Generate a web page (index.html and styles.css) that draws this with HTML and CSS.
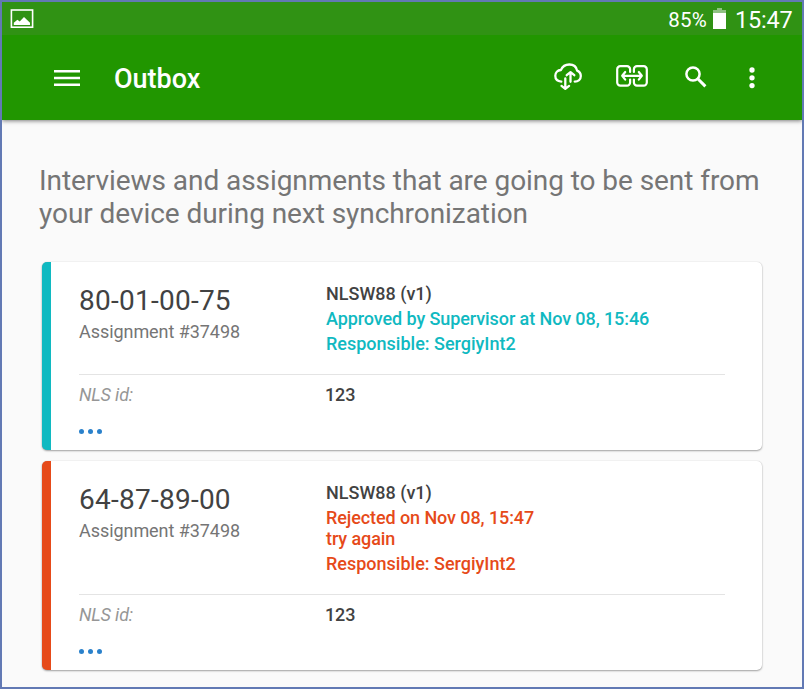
FILE: index.html
```html
<!DOCTYPE html>
<html lang="en">
<head>
<meta charset="utf-8">
<title>Outbox</title>
<link rel="stylesheet" href="styles.css">
</head>
<body>
<div class="screen">
  <div class="status">
    <svg class="picture" width="24" height="20" viewBox="0 0 24 20"><rect x="1.4" y="1" width="21.2" height="17.2" fill="none" stroke="#fff" stroke-width="1.6"/><path d="M3.8 16V13.8L7.4 10.8l2.3 1.8L14 8l6 5.8V16z" fill="#fff"/></svg>
    <span class="percent">85%</span>
    <svg class="battery" width="13" height="21" viewBox="0 0 13 21"><path d="M4 0h5v2h4v3H0V2h4z" fill="#8fc282"/><path d="M0 5h13v16H0z" fill="#fff"/></svg>
    <span class="clock">15:47</span>
  </div>
  <header class="toolbar">
    <svg class="menu" width="26" height="18" viewBox="0 0 26 18"><path d="M0 2.3h26M0 9h26M0 15.7h26" stroke="#fff" stroke-width="2.5"/></svg>
    <h1>Outbox</h1>
    <svg class="sync" width="28" height="28" viewBox="0 0 28 28" fill="none" stroke="#fff" stroke-width="2.3" stroke-linecap="round" stroke-linejoin="round"><path d="M7.3 18.6C3.7 18.3 1.3 16 1.3 12.8c0-3.2 2.3-5.6 5.6-5.8C8.4 3.5 11.7 1.5 15.3 1.5c4.1 0 7.1 2.3 7.8 6.1 2.3 1 3.7 3 3.7 5.4 0 3.4-2.6 5.6-6.1 5.6"/><path d="M11.3 15.5v10.2M7.5 22.9l3.8 3 3.8-3M16.5 18.8v-9.4M12.7 12.2l3.8-3 3.8 3"/></svg>
    <svg class="link" width="32" height="22" viewBox="0 0 32 22" fill="none" stroke="#fff" stroke-width="2.2" stroke-linecap="round" stroke-linejoin="round"><path d="M14.1 7V4.3a3.1 3.1 0 0 0-3.1-3.1H4.3a3.1 3.1 0 0 0-3.1 3.1v13.2a3.1 3.1 0 0 0 3.1 3.1H11a3.1 3.1 0 0 0 3.1-3.1v-2.9M17.9 7V4.3A3.1 3.1 0 0 1 21 1.2h6.7a3.1 3.1 0 0 1 3.1 3.1v13.2a3.1 3.1 0 0 1-3.1 3.1H21a3.1 3.1 0 0 1-3.1-3.1v-2.9"/><path d="M6.5 10.8h19M9.2 7 6.2 10.8l3 3.8M22.8 7l3 3.8-3 3.8"/></svg>
    <svg class="search" width="22" height="22" viewBox="0 0 22 22" fill="none" stroke="#fff"><circle cx="8" cy="8" r="6.6" stroke-width="2.5"/><path d="m12.8 12.8 7.6 7.6" stroke-width="3"/></svg>
    <svg class="more" width="6" height="22" viewBox="0 0 6 22" fill="#fff"><circle cx="3" cy="3" r="2.65"/><circle cx="3" cy="10.8" r="2.65"/><circle cx="3" cy="18.6" r="2.65"/></svg>
  </header>
  <main>
    <p class="intro">Interviews and assignments that are going to be sent from your device during next synchronization</p>
    <article class="card approved">
      <div class="summary">
        <div class="key"><h2>80-01-00-75</h2><p>Assignment #37498</p></div>
        <div class="info"><p>NLSW88 (v1)</p><p class="state event">Approved by Supervisor at Nov 08, 15:46</p><p class="state">Responsible: SergiyInt2</p></div>
      </div>
      <div class="answer"><em>NLS id:</em><strong>123</strong></div>
      <div class="dots"><i></i><i></i><i></i></div>
    </article>
    <article class="card rejected">
      <div class="summary">
        <div class="key"><h2>64-87-89-00</h2><p>Assignment #37498</p></div>
        <div class="info"><p>NLSW88 (v1)</p><p class="state event">Rejected on Nov 08, 15:47<br>try again</p><p class="state">Responsible: SergiyInt2</p></div>
      </div>
      <div class="answer"><em>NLS id:</em><strong>123</strong></div>
      <div class="dots"><i></i><i></i><i></i></div>
    </article>
  </main>
</div>
</body>
</html>
```
FILE: styles.css
```css
* { box-sizing: border-box; margin: 0; padding: 0; }
body { font-family: Roboto, sans-serif; color: #424242; }
svg { display: block; flex: none; }
.screen { width: 804px; height: 689px; border: 2px solid #6279b4; background: #fafafa; overflow: hidden; }

.status { height: 33px; display: flex; align-items: flex-start; background: #309214; color: #fff; white-space: nowrap; }
.picture { margin: 7px 0 0 8px; }
.percent { margin: 6px 6px 0 auto; font-size: 20.5px; line-height: 24px; letter-spacing: .2px; }
.battery { margin-top: 6px; }
.clock { width: 57px; margin: 4px 10px 0 9px; font-size: 23.5px; line-height: 28px; letter-spacing: -.2px; }

.toolbar { position: relative; height: 85px; display: flex; align-items: center; padding-left: 52px; background: #219600; color: #fff; box-shadow: 0 1px 4px rgba(0,0,0,.5); clip-path: inset(0 0 -8px 0); }
.toolbar h1 { width: 440px; margin-left: 34px; font-size: 27px; line-height: 32px; font-weight: 500; padding-top: 2px; }
.sync { margin: -2px 0 0 0; }
.link { margin: -3px 0 0 34px; }
.search { margin: 0 0 2px 36.5px; }
.more { margin-left: 42px; }

main { padding: 44px 40px 0 40px; }
.intro { margin: 0 -6px 0 -3px; font-size: 28px; line-height: 33px; letter-spacing: -.06px; color: #757575; }
.card { background: #fff; border-radius: 5px; border-left: 9px solid; box-shadow: 0 1px 2px rgba(0,0,0,.35), 0 0 1px rgba(0,0,0,.2); padding: 22px 37px 0 28px; }
.approved { height: 188px; margin-top: 32px; border-color: #10b9c1; }
.rejected { height: 209px; margin-top: 11px; border-color: #e64a19; }
.summary { display: grid; grid-template-columns: 247px 1fr; padding-bottom: 20px; border-bottom: 1px solid #e4e4e4; }
.key h2 { font-size: 28px; line-height: 33px; letter-spacing: .25px; font-weight: 400; }
.key p { margin-top: 4px; font-size: 18px; line-height: 21px; letter-spacing: -.06px; color: #757575; }
.info { display: flex; flex-direction: column; gap: 4px; margin-top: -1px; font-size: 18px; line-height: 21px; font-weight: 500; }
.event { letter-spacing: -.09px; }
.approved .state { color: #10b9c1; }
.rejected .state { color: #e64a19; }
.answer { display: grid; grid-template-columns: 246px 1fr; margin-top: 9px; font-size: 18px; line-height: 21px; }
.answer em { color: #969696; letter-spacing: -.15px; }
.answer strong { font-weight: 500; letter-spacing: -.15px; }
.dots { display: flex; gap: 4px; margin-top: 24px; }
.dots i { width: 5px; height: 5px; border-radius: 50%; background: #2a81cb; }
```
